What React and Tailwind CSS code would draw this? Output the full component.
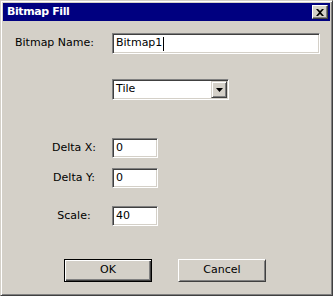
import React from "react";

const sunken =
  "border border-t-[#808080] border-l-[#808080] border-r-white border-b-white shadow-[inset_1px_1px_0_#404040,inset_-1px_-1px_0_#d4d0c8] bg-white";

const Field = ({ value, width }) => (
  <div className={`${sunken} h-[20px] ${width} flex items-center pl-[3px]`}>
    <span>{value}</span>
  </div>
);

const Button = ({ children, primary }) => (
  <button
    type="button"
    className={
      primary
        ? "flex h-[23px] w-[88px] items-center justify-center border border-black bg-[#d4d0c8] shadow-[inset_1px_1px_0_#fff,inset_-1px_-1px_0_#404040,inset_-2px_-2px_0_#808080]"
        : "flex h-[23px] w-[88px] items-center justify-center border border-t-white border-l-white border-r-[#404040] border-b-[#404040] bg-[#d4d0c8] shadow-[inset_1px_1px_0_#d4d0c8,inset_-1px_-1px_0_#808080]"
    }
  >
    {children}
  </button>
);

const NumberRow = ({ label, value, mt }) => (
  <div className={`flex items-center ${mt}`}>
    <span className="ml-[37px] mr-[4px] w-[68px] text-center">{label}</span>
    <Field value={value} width="w-[46px]" />
  </div>
);

export default function App() {
  return (
    <div
      className="flex h-[296px] w-[333px] flex-col border border-t-[#d4d0c8] border-l-[#d4d0c8] border-r-[#404040] border-b-[#404040] bg-[#d4d0c8] p-[2px] text-[11px] text-black shadow-[inset_1px_1px_0_#fff,inset_-1px_-1px_0_#808080]"
      style={{ fontFamily: '"DejaVu Sans", Verdana, sans-serif' }}
    >
      <div className="flex h-[18px] items-center justify-between bg-[#000080] pl-[4px] pr-[2px]">
        <span className="text-[11px] font-bold tracking-[-0.4px] text-white">
          Bitmap Fill
        </span>
        <div className="flex h-[14px] w-[16px] items-center justify-center border border-t-white border-l-white border-r-[#404040] border-b-[#404040] bg-[#d4d0c8] shadow-[inset_-1px_-1px_0_#808080]">
          <svg width="8" height="7" viewBox="0 0 8 7">
            <path d="M0 0h2l2 2 2-2h2L5 3.5 8 7H6L4 5 2 7H0l3-3.5z" fill="#000" />
          </svg>
        </div>
      </div>

      <div className="mt-[12px] flex items-center">
        <span className="ml-[12px] w-[97px]">Bitmap Name:</span>
        <div className={`${sunken} flex h-[21px] w-[208px] items-center pl-[3px]`}>
          <span>Bitmap1</span>
          <span className="ml-px h-[14px] w-px bg-black" />
        </div>
      </div>

      <div className="mt-[25px] flex items-center">
        <div className="w-[109px]" />
        <div className={`${sunken} flex h-[21px] w-[117px] items-center justify-between pl-[3px] pr-px`}>
          <span>Tile</span>
          <div className="flex h-[17px] w-[16px] items-center justify-center border border-t-[#d4d0c8] border-l-[#d4d0c8] border-r-[#404040] border-b-[#404040] bg-[#d4d0c8] shadow-[inset_1px_1px_0_#fff,inset_-1px_-1px_0_#808080]">
            <svg width="7" height="4" viewBox="0 0 7 4">
              <path d="M0 0h7L3.5 4z" fill="#000" />
            </svg>
          </div>
        </div>
      </div>

      <NumberRow label="Delta X:" value="0" mt="mt-[38px]" />
      <NumberRow label="Delta Y:" value="0" mt="mt-[10px]" />
      <NumberRow label="Scale:" value="40" mt="mt-[18px]" />

      <div className="mt-[33px] flex gap-[26px] pl-[61px]">
        <Button primary>OK</Button>
        <Button>Cancel</Button>
      </div>
    </div>
  );
}
